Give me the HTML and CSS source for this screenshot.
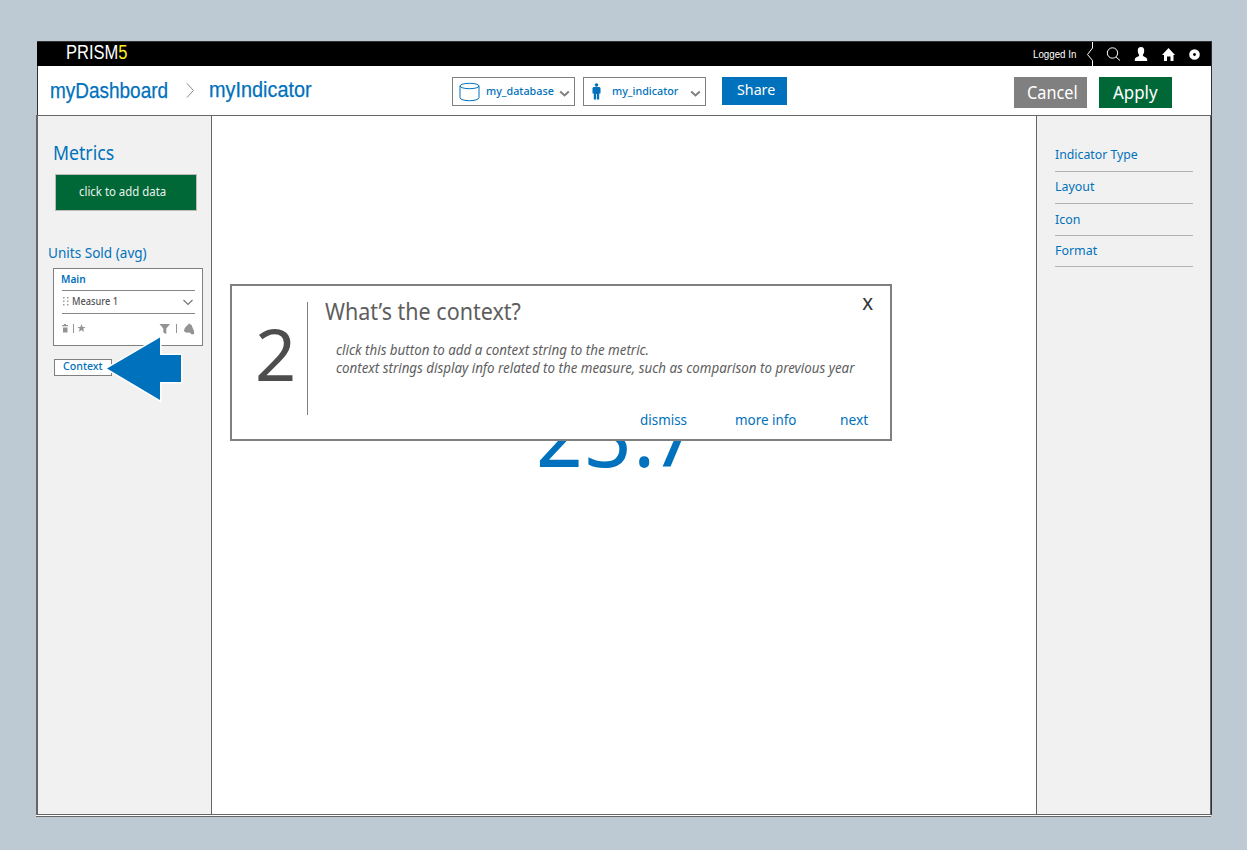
FILE: index.html
```
<!DOCTYPE html>
<html lang="en">
<head>
<meta charset="utf-8">
<title>PRISM5</title>
<link rel="stylesheet" href="styles.css">
</head>
<body>
<div class="window">
  <header class="topbar">
    <div class="brand"><span class="t t-brand">PRISM<b>5</b></span></div>
    <div class="logged"><span class="t t-logged">Logged In</span></div>
    <svg class="top-icons" width="126" height="24" viewBox="1085 42 126 24">
      <path d="M1092.500 42v6l-5 6.500 5 6v5.500" fill="none" stroke="#fff"/>
      <circle cx="1112.500" cy="53" r="5.200" fill="none" stroke="#fff"/>
      <path d="M1116 57l4 3.500" stroke="#fff"/>
      <path d="M1141 47c2.300 0 3.400 1.500 3.200 4-.1 2-.8 3-1.400 4 .2 2 4.400 2 4.400 4.500v1.500h-12.400v-1.500c0-2.500 4.200-2.500 4.400-4.500-.6-1-1.300-2-1.400-4-.2-2.500.9-4 3.200-4z" fill="#fff"/>
      <path d="M1168.500 48l6.500 7h-1.500v6h-3v-4.500h-3.500v4.500h-3v-6h-2z" fill="#fff"/>
      <circle cx="1194.500" cy="54.500" r="3.400" fill="none" stroke="#fff" stroke-width="3.800"/>
    </svg>
  </header>

  <div class="toolbar">
    <div class="crumb crumb-1"><span class="t t-dash">myDashboard</span></div>
    <svg class="sep" width="9" height="17" viewBox="0 0 9 17"><path d="M1 1.500l6.500 7L1 15.500" fill="none" stroke="#888"/></svg>
    <div class="crumb crumb-2"><span class="t t-ind">myIndicator</span></div>
    <div class="select">
      <svg class="ic-db" width="22" height="21" viewBox="0 0 22 21"><g fill="none" stroke="#0071bc"><ellipse cx="10.500" cy="4" rx="9.500" ry="2.700"/><path d="M1 4v11.500c0 4.300 19 4.300 19 0V4"/></g></svg>
      <span class="t t-db">my_database</span>
      <svg class="ic-chev" width="11" height="8" viewBox="0 0 11 8"><path d="M1.200 1.500l4.300 4 4.300-4" fill="none" stroke="#808080" stroke-width="2"/></svg>
    </div>
    <div class="select">
      <svg class="ic-man" width="9" height="17" viewBox="0 0 9 17"><circle cx="4.500" cy="2" r="1.800" fill="#0071bc"/><path d="M1.500 4h6l1 1v5.500h-1.300V16.500H4.900V11h-.8v5.500H1.800v-6H.5V5z" fill="#0071bc"/></svg>
      <span class="t t-mi">my_indicator</span>
      <svg class="ic-chev" width="11" height="8" viewBox="0 0 11 8"><path d="M1.200 1.500l4.300 4 4.300-4" fill="none" stroke="#808080" stroke-width="2"/></svg>
    </div>
    <div class="btn share"><span class="t t-share">Share</span></div>
    <div class="btn cancel"><span class="t t-cancel">Cancel</span></div>
    <div class="btn apply"><span class="t t-apply">Apply</span></div>
  </div>

  <div class="body">
    <aside class="metrics">
      <h2><span class="t t-metrics">Metrics</span></h2>
      <div class="add"><span class="t t-add">click to add data</span></div>
      <h3><span class="t t-units">Units Sold (avg)</span></h3>
      <div class="card">
        <div class="card-title"><span class="t t-main">Main</span></div>
        <div class="measure">
          <svg width="7" height="10" viewBox="0 0 7 10" fill="#999"><path d="M0 0h1.500v1.500H0zM4 0h1.500v1.500H4zM0 3.500h1.500V5H0zM4 3.500h1.500V5H4zM0 7h1.500v1.500H0zM4 7h1.500v1.500H4z"/></svg>
          <span class="t t-measure">Measure 1</span>
          <svg class="m-chev" width="10" height="7" viewBox="0 0 10 7"><path d="M.5 1L5 5.500 9.500 1" fill="none" stroke="#777" stroke-width="1.200"/></svg>
        </div>
        <svg class="tools" width="134" height="12" viewBox="62 323 134 12" fill="#939393">
          <path d="M62 325h2v-1h2v1h2v1.300h-6zM63 327.500h4.500v5H63z"/>
          <path d="M73 324h1v9h-1zM176 324h1v9h-1z"/>
          <path d="M81.500 324l1.100 3h3.100l-2.500 1.800 1 3.200-2.700-1.900-2.700 1.900 1-3.200-2.500-1.800h3.100z"/>
          <path d="M159.500 324h10.500l-3.700 4.500v5.500l-3-1.500v-4z"/>
          <path d="M189 323.500l2.500 1.500 2.500 6 .2 3-2.200.5-2.500-2-3 .3-2.700-1.800 1-3z"/>
        </svg>
      </div>
      <div class="context"><span class="t t-context">Context</span>
        <svg class="arrow" width="80" height="68" viewBox="104 335 80 68"><path d="M107 368.500L160 337.500V355H181V382H160V400Z" fill="#0071bc" stroke="#fff" stroke-width="3" paint-order="stroke"/></svg>
      </div>
    </aside>

    <main class="canvas">
      <div class="value"><span class="t t-value">23<span class="dot">.</span>7</span></div>
      <section class="dialog">
        <div class="step"><span class="t t-step">2</span></div>
        <div class="message">
          <h1><span class="t t-title">What’s the context?</span></h1>
          <p><span class="t t-l1">click this button to add a context string to the metric.</span></p>
          <p><span class="t t-l2">context strings display info related to the measure, such as comparison to previous year</span></p>
          <nav><a class="a1"><span class="t t-dismiss">dismiss</span></a><a class="a2"><span class="t t-more">more info</span></a><a class="a3"><span class="t t-next">next</span></a></nav>
        </div>
        <span class="close">X</span>
      </section>
    </main>

    <aside class="options">
      <div class="opt first"><span class="t t-type">Indicator Type</span></div>
      <div class="opt"><span class="t t-layout">Layout</span></div>
      <div class="opt icon"><span class="t t-icon">Icon</span></div>
      <div class="opt format"><span class="t t-format">Format</span></div>
    </aside>
  </div>
  <div class="base"></div>
</div>
</body>
</html>
```
FILE: styles.css
```
* { box-sizing: border-box; }
body { margin: 0; background: #bdcad3; font-family: "Noto Sans", sans-serif; width: 1247px; height: 850px; overflow: hidden; }
h1, h2, h3, p { margin: 0; font-weight: 400; }
svg { display: block; flex: none; }

/* Condensed labels */
.t { display: inline-block; white-space: nowrap; transform-origin: 0 50%; flex: none; }
.t-brand { transform: scaleX(.825); }
.t-logged { transform: scaleX(.885); }
.t-dash { transform: scaleX(.862); }
.t-ind { transform: scaleX(.903); }
.t-db, .t-mi { transform: scaleX(.935); }
.t-share { transform: scaleX(.95); }
.t-cancel { transform: scaleX(.93); }
.t-apply { transform: scaleX(.965); }
.t-metrics { transform: scaleX(.93); }
.t-add { transform: scaleX(.95); }
.t-units { transform: scaleX(.935); }
.t-main { transform: scaleX(.92); }
.t-measure { transform: scaleX(.84); }
.t-context { transform: scaleX(.965); }
.t-value { transform: scaleX(.94); letter-spacing: 2px; }
.t-title { transform: scaleX(.935); }
.t-l1, .t-l2 { transform: scaleX(.92); }
.t-dismiss, .t-more { transform: scaleX(.925); }
.t-next { transform: scaleX(.95); }
.t-type { transform: scaleX(.945); }
.t-layout, .t-icon, .t-format { transform: scaleX(.955); }

.window { margin: 41px 0 0 36px; width: 1176px; display: flex; flex-direction: column; }

.topbar { height: 25px; margin-left: 1px; background: #000; border-top: 1px solid #333; border-right: 1px solid #2b2f33; display: flex; }
.brand { width: 996px; padding-left: 29px; font: 20px/21px "Liberation Sans", sans-serif; color: #fff; }
.brand b { font-weight: 400; color: #fcee21; }
.logged { width: 52px; font: 11px/25px "Liberation Sans", sans-serif; color: #fff; }

.toolbar { height: 49px; margin-left: 1px; background: #fff; border-left: 1px solid #333; border-right: 1px solid #2b2f33; display: flex; align-items: flex-start; padding-top: 11px; }
.crumb { flex: none; font: 22px/26px "Liberation Sans", sans-serif; color: #0071bc; -webkit-text-stroke: .25px #0071bc; }
.crumb-1 { width: 148px; padding-left: 12px; margin-top: 1px; }
.sep { margin-top: 5px; }
.crumb-2 { width: 257px; padding-left: 14px; }
.select { flex: none; width: 123px; height: 29px; border: 1px solid #808080; display: flex; position: relative; margin-right: 8px; font-size: 11.5px; line-height: 26px; font-weight: 500; color: #0071bc; }
.ic-db { margin: 4px 5px 0 6px; }
.ic-man { margin: 5px 11px 0 8px; }
.ic-chev { position: absolute; right: 4px; top: 12px; }
.btn { flex: none; color: #fff; }
.share { width: 65px; height: 28px; margin-left: 8px; padding-left: 15px; background: #0071bc; font-size: 15px; line-height: 25px; }
.cancel { width: 73px; height: 31px; margin-left: 227px; padding-left: 13px; background: #808080; font-size: 17.5px; line-height: 30px; }
.apply { width: 73px; height: 31px; margin-left: 12px; padding-left: 14px; background: #006837; font-size: 17.5px; line-height: 30px; }

.body { height: 700px; border-top: 1px solid #666; border-bottom: 1px solid #666; border-left: 2px solid #666; border-right: 1px solid #333; display: flex; }
.metrics { width: 174px; background: #f1f1f1; border-right: 1px solid #666; padding-top: 25px; color: #0071bc; }
.metrics h2 { padding-left: 15px; font-size: 19px; line-height: 24px; }
.add { width: 142px; height: 37px; margin: 9px 0 0 17px; border: 1px solid #bbb; background: #006837; color: #e8f2ec; padding-left: 23px; font-size: 12px; line-height: 34px; }
.metrics h3 { margin-top: 31px; padding-left: 10px; font-size: 14.5px; line-height: 20px; }
.card { width: 150px; height: 78px; margin: 6px 0 0 15px; padding: 0 7px 0 8px; border: 1px solid #808080; background: #fff; }
.card-title { height: 22px; padding-top: 3px; font-size: 11px; line-height: 14px; font-weight: 600; border-bottom: 1px solid #888; }
.card-title .t { margin-left: -1px; }
.measure { height: 23px; border-bottom: 1px solid #888; display: flex; font-size: 11px; line-height: 20px; font-weight: 500; color: #555; position: relative; align-items: flex-start; }
.measure > svg:first-child { margin: 6px 2px 0 1px; }
.measure .m-chev { position: absolute; right: 2px; top: 8px; }
.tools { margin-top: 9px; }
.context { position: relative; width: 58px; height: 17px; margin: 13px 0 0 16px; border: 1px solid #808080; background: #fff; padding-left: 8px; font-size: 11px; line-height: 12px; font-weight: 500; }
.arrow { position: absolute; left: 49px; top: -25px; }

.canvas { width: 824px; position: relative; background: #fff; }
.value { padding: 267px 0 0 324px; font-size: 87px; line-height: 100px; color: #0071bc; }
.dot { letter-spacing: -4px; }
.dialog { position: absolute; left: 18px; top: 168px; width: 662px; height: 157px; border: 2px solid #808080; background: #fff; display: flex; padding-top: 16px; color: #4d4d4d; }
.step { flex: none; width: 76px; height: 113px; border-right: 1px solid #808080; padding-left: 23px; font-size: 72px; line-height: 102px; }
.message { flex: 1; min-width: 0; padding-left: 17px; color: #5e5e5e; }
.message h1 { font-size: 23px; line-height: 18px; }
.message p { padding-left: 11px; font-size: 14.5px; line-height: 18px; font-style: italic; }
.message h1 + p { margin-top: 20px; }
.message nav { display: flex; margin-top: 33px; font-size: 14.5px; line-height: 20px; color: #0071bc; }
.a1 { width: 95px; margin-left: 315px; }
.a2 { width: 105px; }
.close { position: absolute; right: 17px; top: 7px; font-size: 17px; line-height: 22px; font-weight: 500; color: #333; }

.options { width: 175px; background: #f1f1f1; border-left: 1px solid #666; border-right: 1px solid #666; padding-left: 18px; color: #0071bc; }
.opt { width: 138px; height: 32px; border-bottom: 1px solid #b3b3b3; display: flex; align-items: flex-end; padding-bottom: 7px; font-size: 13px; line-height: 20px; }
.first { height: 56px; }
.icon { padding-bottom: 6px; }
.format { height: 31px; padding-bottom: 6px; }

.base { width: 1175px; height: 2px; background: #fff; border-bottom: 1px solid #666; }
```
